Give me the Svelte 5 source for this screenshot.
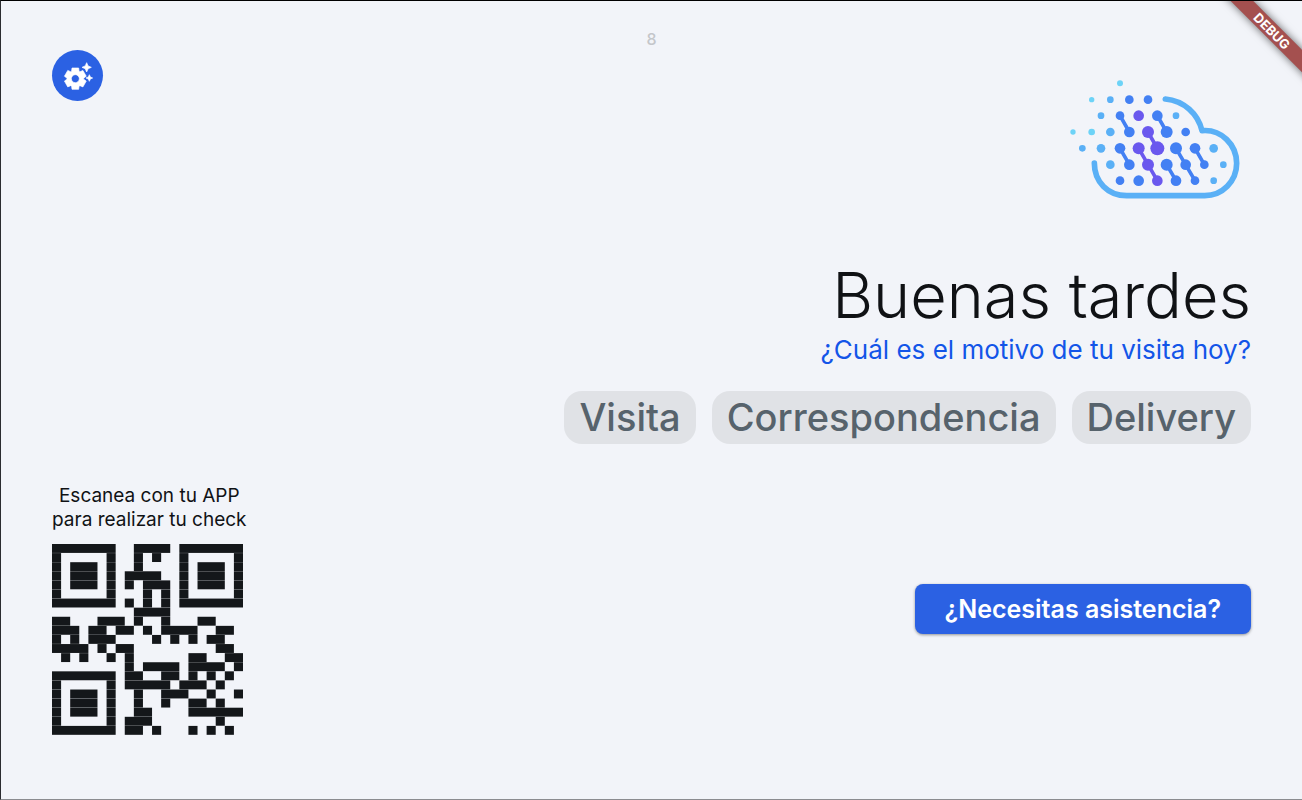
<script lang="ts">
    interface Dot {
        x: number;
        y: number;
        r: number;
        color: string;
    }

    const reasons = ['Visita', 'Correspondencia', 'Delivery'];

    let secondsLeft = $state(8);
    let selected = $state('');

    const qrRows = [
        '#######..####.#######',
        '#.....#..#.#..#.....#',
        '#.###.#..#....#.###.#',
        '#.###.#.####..#.###.#',
        '#.###.#.#.###.#.###.#',
        '#.....#...#.#.#.....#',
        '#######.#.#.#.#######',
        '.........####........',
        '##...###.#..#...##...',
        '###.##.##.#.####..##.',
        '#.#.###....#.#.#.##..',
        '####.#.##.........##.',
        '.#.#..#.#......##..##',
        '........#.####.####.#',
        '#######.##..##.#.#.#.',
        '#.....#.#####.###.#..',
        '#.###.#..#..###..#..#',
        '#.###.#..#..#..##.#..',
        '#.###.#..##....######',
        '#.....#.###.......#..',
        '#######.##.#...#.#.#.',
    ];

    // one bar per horizontal run of dark modules
    const qrBars = qrRows.flatMap((row, y) =>
        [...row.matchAll(/#+/g)].map((run) => ({ x: run.index, y, length: run[0].length }))
    );

    const CYAN = '#6dd3f7';
    const SKY = '#5ab0f6';
    const BLUE = '#4380f3';
    const VIOLET = '#6a58ee';

    const dots: Dot[] = [
        { x: 180, y: 40, r: 9, color: CYAN },
        { x: 95, y: 89, r: 8, color: CYAN },
        { x: 151, y: 89, r: 10, color: SKY },
        { x: 208, y: 89, r: 13, color: BLUE },
        { x: 264, y: 89, r: 13, color: BLUE },
        { x: 123, y: 137, r: 10, color: SKY },
        { x: 180, y: 137, r: 13, color: BLUE },
        { x: 236, y: 137, r: 16, color: VIOLET },
        { x: 292, y: 137, r: 16, color: BLUE },
        { x: 348, y: 137, r: 10, color: SKY },
        { x: 39, y: 186, r: 8, color: CYAN },
        { x: 95, y: 186, r: 10, color: CYAN },
        { x: 151, y: 186, r: 13, color: SKY },
        { x: 208, y: 186, r: 16, color: BLUE },
        { x: 264, y: 186, r: 18, color: VIOLET },
        { x: 320, y: 186, r: 18, color: BLUE },
        { x: 377, y: 186, r: 13, color: BLUE },
        { x: 67, y: 235, r: 10, color: SKY },
        { x: 123, y: 235, r: 13, color: SKY },
        { x: 180, y: 235, r: 16, color: BLUE },
        { x: 236, y: 235, r: 18, color: VIOLET },
        { x: 292, y: 235, r: 21, color: VIOLET },
        { x: 348, y: 235, r: 18, color: BLUE },
        { x: 405, y: 235, r: 16, color: BLUE },
        { x: 461, y: 235, r: 13, color: SKY },
        { x: 151, y: 284, r: 13, color: SKY },
        { x: 208, y: 284, r: 16, color: BLUE },
        { x: 264, y: 284, r: 18, color: VIOLET },
        { x: 320, y: 284, r: 18, color: BLUE },
        { x: 377, y: 284, r: 16, color: BLUE },
        { x: 433, y: 284, r: 13, color: BLUE },
        { x: 490, y: 284, r: 10, color: SKY },
        { x: 180, y: 332, r: 13, color: BLUE },
        { x: 236, y: 332, r: 16, color: BLUE },
        { x: 292, y: 332, r: 16, color: VIOLET },
        { x: 348, y: 332, r: 16, color: BLUE },
        { x: 405, y: 332, r: 13, color: BLUE },
        { x: 461, y: 332, r: 10, color: SKY },
    ];

    const links = [
        { d: 'M180 137L208 186M292 137L320 186M180 235L208 284M348 235L405 332M405 235L433 284M320 284L348 332', color: BLUE },
        { d: 'M264 186L292 235M236 235L292 332', color: VIOLET },
    ];
</script>

<main class="kiosk">
    <div class="countdown">{secondsLeft}</div>

    <div class="content">
        <aside class="side">
            <button class="settings" type="button" aria-label="Configuración">
                <svg viewBox="0 0 24 24" width="32" height="32" fill="currentColor">
                    <path d="M17.41 6.59L15 5.5l2.41-1.09L18.5 2l1.09 2.41L22 5.5l-2.41 1.09L18.5 9zM21.28 12.72L20.5 11l-.78 1.72-1.72.78 1.72.78.78 1.72.78-1.72 1.72-.78zM16.24 14.37l1.94 1.47-2.5 4.33-2.24-.94c-.2.13-.42.26-.64.37L12.5 22h-5l-.3-2.41c-.22-.11-.43-.23-.64-.37l-2.24.94-2.5-4.33 1.94-1.47C3.75 14.25 3.75 14.12 3.75 14s0-.25.01-.37l-1.94-1.47 2.5-4.33 2.24.94c.2-.13.42-.26.64-.37L7.5 6h5l.3 2.41c.22.11.43.23.64.37l2.24-.94 2.5 4.33-1.94 1.47c.01.12.01.24.01.37s0 .24-.01.36zM13 14c0-1.66-1.34-3-3-3s-3 1.34-3 3 1.34 3 3 3 3-1.34 3-3z" stroke="currentColor" stroke-width="0.5" stroke-linejoin="round"/>
                </svg>
            </button>

            <div class="checkin">
                <p>Escanea con tu APP<br>para realizar tu check</p>
                <svg class="qr" viewBox="0 0 210 210" role="img" aria-label="Código QR">
                    {#each qrBars as bar}
                        <rect x={bar.x * 10} y={bar.y * 10} width={bar.length * 10} height="9.8"/>
                    {/each}
                </svg>
            </div>
        </aside>

        <section class="welcome">
            <svg class="logo" viewBox="30 27 543 363" aria-hidden="true">
                <path d="M316 87C372 92 414 132 426 182C484 177 530 224 530 280C530 334 487 377 434 377H200C144 377 103 336 103 279" fill="none" stroke={SKY} stroke-width="17" stroke-linecap="round" stroke-linejoin="round"/>
                {#each links as link}
                    <path d={link.d} fill="none" stroke={link.color} stroke-width="11"/>
                {/each}
                {#each dots as dot}
                    <circle cx={dot.x} cy={dot.y} r={dot.r} fill={dot.color}/>
                {/each}
            </svg>

            <h1>Buenas tardes</h1>
            <h2>¿Cuál es el motivo de tu visita hoy?</h2>

            <div class="reasons">
                {#each reasons as reason}
                    <button
                        class="reason"
                        type="button"
                        aria-pressed={selected === reason}
                        onclick={() => (selected = reason)}
                    >
                        {reason}
                    </button>
                {/each}
            </div>

            <button class="assist" type="button">¿Necesitas asistencia?</button>
        </section>
    </div>

    <div class="debug"><span>DEBUG</span></div>
</main>

<style>
    :global(body) {
        margin: 0;
        background: #f2f4f9;
    }

    .kiosk {
        position: relative;
        box-sizing: border-box;
        display: flex;
        flex-direction: column;
        min-height: 100vh;
        overflow: hidden;
        border-top: 1px solid #000;
        border-left: 1px solid #2b2c30;
        border-bottom: 1px solid #8b8c90;
        background: #f2f4f9;
        color: #101215;
        font-family: Inter, "Open Sans", sans-serif;
    }

    button {
        border: 0;
        font-family: inherit;
        cursor: pointer;
    }

    .countdown {
        padding-top: 28px;
        height: 21px;
        line-height: 20px;
        text-align: center;
        font-size: 16px;
        font-weight: 500;
        color: #c4c6ca;
    }

    .content {
        flex: 1;
        display: flex;
        justify-content: space-between;
        padding: 0 51px 64px;
    }

    .side {
        display: flex;
        flex-direction: column;
        justify-content: space-between;
        align-items: flex-start;
    }

    .settings {
        display: flex;
        align-items: center;
        justify-content: center;
        width: 51px;
        height: 51px;
        padding: 0;
        border-radius: 50%;
        background: #2b61e3;
        color: #fff;
    }

    .checkin p {
        margin: 0 0 12px;
        text-align: center;
        font-size: 19px;
        line-height: 24px;
    }

    .qr {
        display: block;
        width: 191px;
        fill: #14171a;
    }

    .welcome {
        display: flex;
        flex-direction: column;
        align-items: flex-end;
        padding-top: 29px;
    }

    .logo {
        width: 181px;
        height: 121px;
    }

    h1 {
        margin: 55px 0 0;
        font-size: 63px;
        font-weight: 350;
        line-height: 80px;
    }

    h2 {
        margin: 0;
        font-size: 26px;
        font-weight: 400;
        line-height: 30px;
        color: #1355e8;
    }

    .reasons {
        display: flex;
        gap: 16px;
        margin-top: 26px;
    }

    .reason {
        padding: 0 15px;
        border-radius: 18px;
        background: #e0e2e6;
        color: #57636c;
        font-size: 38px;
        font-weight: 500;
        line-height: 53px;
    }

    .assist {
        margin-top: 140px;
        padding: 0 30px;
        border-radius: 8px;
        background: #2b61e3;
        box-shadow: 0 1px 3px rgba(0, 0, 0, 0.4);
        color: #fff;
        font-size: 25px;
        font-weight: 600;
        line-height: 50px;
    }

    .debug {
        position: absolute;
        top: 0;
        right: 0;
        width: 92px;
        height: 92px;
        overflow: hidden;
        pointer-events: none;
    }

    .debug span {
        position: absolute;
        top: 22px;
        right: -50px;
        width: 160px;
        background: #a4504f;
        box-shadow: 0 0 8px rgba(0, 0, 0, 0.6);
        color: #fff;
        font-size: 13px;
        font-weight: 700;
        line-height: 16px;
        text-align: center;
        transform: rotate(45deg);
    }
</style>
